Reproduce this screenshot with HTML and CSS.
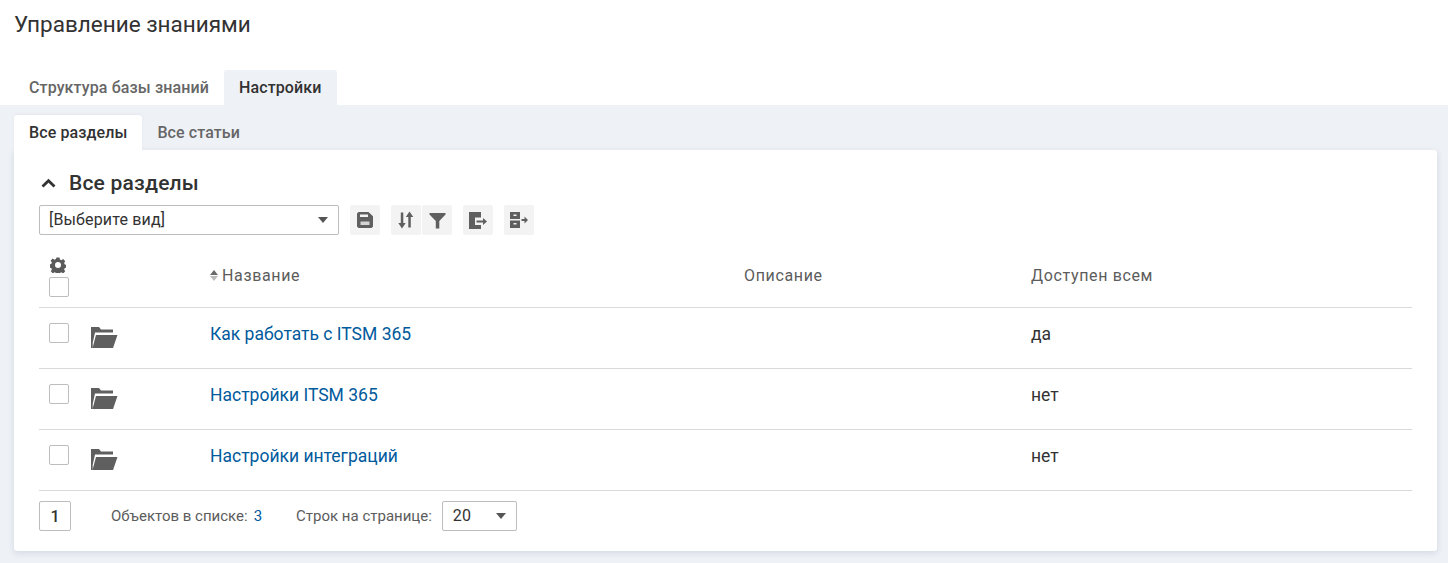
FILE: index.html
```html
<!DOCTYPE html>
<html lang="ru">
<head>
<meta charset="utf-8">
<title>Управление знаниями</title>
<link rel="stylesheet" href="styles.css">
</head>
<body>
<header class="top">
  <h1 class="title">Управление знаниями</h1>
  <nav class="tabs">
    <span class="tab">Структура базы знаний</span>
    <span class="tab tab-on">Настройки</span>
  </nav>
</header>
<main class="main">
  <nav class="subtabs">
    <span class="subtab subtab-on">Все разделы</span>
    <span class="subtab">Все статьи</span>
  </nav>
  <section class="card">
    <div class="card-head">
      <svg class="chev" width="15" height="10" viewBox="0 0 15 10"><path d="M1.500 8.500 7.500 2.700 13.500 8.500" fill="none" stroke="#333" stroke-width="2.800"/></svg>
      <h2 class="card-title">Все разделы</h2>
    </div>
    <div class="toolbar">
      <div class="select select-view"><span class="select-text">[Выберите вид]</span><i class="caret"></i></div>
      <button class="tool"><svg width="16" height="16" viewBox="0 0 16 16"><path fill="#5f5f5f" fill-rule="evenodd" d="M0 1.500 1.500 0h10L16 4.300V14.500L14.500 16h-13L0 14.500ZM3 2.500v2.500h8V2.500Z"/><path fill="#d4d4d4" d="M3.500 9.500h9V13h-9z"/></svg></button>
      <div class="tool-pair">
        <button class="tool"><svg width="16" height="18" viewBox="0 0 16 18"><path fill="#5f5f5f" d="M2.800 1.500h2.500V12h2.400L4 17.500.3 12h2.500zM10.300 16.500h2.500V6h2.500L11.500.5 7.800 6h2.500z"/></svg></button>
        <button class="tool"><svg width="17" height="17" viewBox="0 0 17 17"><path fill="#5f5f5f" d="M.5 1h16v1.500L10.300 9v7.500H6.800V9L.5 2.500z"/></svg></button>
      </div>
      <button class="tool"><svg width="18" height="17" viewBox="0 0 18 17"><path fill="#5f5f5f" d="M0 0h12v5.500H6V13h6v4H0z"/><path fill="#5f5f5f" d="M7.500 8.400H14V6l4 3.500-4 3.500v-2.400H7.500z"/></svg></button>
      <button class="tool"><svg width="18" height="16" viewBox="0 0 18 16"><path fill="#5f5f5f" fill-rule="evenodd" d="M0 0h10v7H0zM3.500 2.500V4h3V2.500zM0 8.500h10V16H0zM3.500 11v1.500h3V11z"/><path fill="#5f5f5f" d="M11.500 7h3V4.500L18 8l-3.500 3.500V9h-3z"/></svg></button>
    </div>
    <div class="row row-head">
      <div class="cell-check">
        <svg class="gear" width="16" height="16" viewBox="0 0 16 16"><path fill="#5a5a5a" fill-rule="evenodd" d="M6.500 .5h3l.4 2 1.500.7 1.800-1.100 2 2.100-1.100 1.700.7 1.500 2 .4v2.900l-2 .4-.7 1.500 1.100 1.700-2 2.100-1.800-1.100-1.500.7-.4 2h-3l-.4-2-1.500-.7-1.800 1.100-2-2.100 1.100-1.700-.7-1.500-2-.4V7.300l2-.4.7-1.500L.6 3.700l2-2.100 1.800 1.100 1.500-.7zM8 5a3 3 0 1 0 0 6 3 3 0 0 0 0-6z"/></svg>
        <span class="check"></span>
      </div>
      <div></div>
      <div class="th th-sort"><span class="sort"><i class="up"></i><i class="down"></i></span>Название</div>
      <div class="th">Описание</div>
      <div class="th">Доступен всем</div>
    </div>
    <div class="row">
      <div class="cell-check"><span class="check"></span></div>
      <div class="cell-folder"><svg width="28" height="22" viewBox="0 0 28 22"><use href="#folder"/></svg></div>
      <a class="link">Как работать с ITSM 365</a>
      <div></div>
      <div class="val">да</div>
    </div>
    <div class="row">
      <div class="cell-check"><span class="check"></span></div>
      <div class="cell-folder"><svg width="28" height="22" viewBox="0 0 28 22"><use href="#folder"/></svg></div>
      <a class="link">Настройки ITSM 365</a>
      <div></div>
      <div class="val">нет</div>
    </div>
    <div class="row">
      <div class="cell-check"><span class="check"></span></div>
      <div class="cell-folder"><svg width="28" height="22" viewBox="0 0 28 22"><use href="#folder"/></svg></div>
      <a class="link">Настройки интеграций</a>
      <div></div>
      <div class="val">нет</div>
    </div>
    <div class="pager">
      <span class="page">1</span>
      <span class="count">Объектов в списке:<b class="num">3</b></span>
      <span class="per">Строк на странице:</span>
      <div class="select select-per"><span class="select-text">20</span><i class="caret"></i></div>
    </div>
  </section>
</main>
<svg class="defs" width="0" height="0"><defs><symbol id="folder" viewBox="0 0 28 22"><path fill="#5f5f5f" d="M1 0h8l2 2.500h12v3H5L2.700 16v5H1z"/><path fill="#5f5f5f" d="M6 8h21.500L23 21H2.500z"/></symbol></defs></svg>
</body>
</html>
```
FILE: styles.css
```css
* { box-sizing: border-box; }
html, body { margin: 0; padding: 0; }
body { width: 1448px; height: 563px; overflow: hidden; background: #eef1f6; font-family: Roboto, "Noto Sans", sans-serif; color: #323232; }
.top { background: #fff; height: 105px; padding-left: 14px; display: flex; flex-direction: column; }
.title { margin: 0; padding-top: 11px; height: 70px; font-size: 22.500px; line-height: 26px; font-weight: 400; color: #323232; }
.tabs { display: flex; height: 35px; }
.tab { flex: none; padding: 0 15px; line-height: 35px; font-size: 16px; font-weight: 500; color: #666; border-radius: 3px 3px 0 0; letter-spacing: .12px; }
.tab-on { background: #eef1f6; color: #323232; width: 113px; }
.main { padding: 10px 11px 12px 14px; }
.subtabs { display: flex; height: 35px; }
.subtab { padding: 0 15px; line-height: 35px; font-size: 16px; font-weight: 500; color: #666; border-radius: 3px 3px 0 0; letter-spacing: .1px; }
.subtab-on { background: #fff; color: #323232; box-shadow: 0 -1px 3px rgba(40,60,90,.05); }
.card { background: #fff; height: 401px; padding: 0 25px; border-radius: 0 3px 3px 3px; box-shadow: 0 2px 6px rgba(40,60,90,.14); }
.card-head { height: 55px; display: flex; align-items: center; padding-top: 11px; }
.chev { margin-left: 2px; }
.card-title { margin: 0 0 0 13px; font-size: 21px; font-weight: 500; letter-spacing: .2px; color: #323232; }
.toolbar { display: flex; align-items: center; height: 30px; }
.select { border: 1px solid #bdbdbd; border-radius: 2px; height: 30px; display: flex; align-items: center; justify-content: space-between; font-size: 16px; letter-spacing: .15px; background: #fff; color: #323232; }
.select-text { position: relative; top: -1px; }
.select-view { width: 300px; padding: 0 10px 0 9px; }
.select-per { width: 75px; padding: 0 10px 0 10px; font-size: 16px; }
.caret { width: 0; height: 0; border: 5px solid transparent; border-top: 6px solid #555; border-bottom: 0; }
.tool { width: 30px; height: 30px; border: 0; padding: 0; background: #f3f3f3; border-radius: 2px; display: flex; align-items: center; justify-content: center; margin-left: 11px; }
.tool-pair { display: flex; gap: 1px; margin-left: 11px; }
.tool-pair .tool { margin: 0; }
.row { display: grid; grid-template-columns: 51px 120px 534px 287px 1fr; height: 61px; border-bottom: 1px solid #d9d9d9; align-items: start; }
.row-head { height: 73px; align-items: center; }
.cell-check { display: flex; flex-direction: column; align-items: flex-start; padding-left: 10px; align-self: start; padding-top: 15px; }
.row-head .cell-check { padding-top: 22px; }
.row-head .cell-check .gear { margin: 0 0 4px 1px; }
.check { display: block; width: 20px; height: 20px; border: 1px solid #bdbdbd; border-radius: 2px; background: #fff; }
.cell-folder { display: flex; align-self: start; padding-top: 19px; }
.th { font-size: 16px; color: #5c5c5c; letter-spacing: .65px; display: flex; align-items: center; padding-top: 9px; }
.sort { display: inline-flex; flex-direction: column; gap: 1px; margin-right: 4px; }
.up { width: 0; height: 0; border: 4px solid transparent; border-bottom: 5px solid #6a6a6a; border-top: 0; }
.down { width: 0; height: 0; border: 4px solid transparent; border-top: 5px solid #bbb; border-bottom: 0; }
.link { font-size: 17.500px; line-height: 21px; color: #005a9c; padding-top: 16px; }
.val { font-size: 17.500px; line-height: 21px; color: #323232; padding-top: 16px; }
.pager { display: flex; align-items: center; height: 40px; padding-top: 10px; font-size: 15px; color: #5c5c5c; }
.page { width: 32px; height: 30px; border: 1px solid #bdbdbd; border-radius: 2px; display: flex; align-items: center; justify-content: center; font-size: 16px; font-weight: 500; color: #323232; }
.count { margin-left: 40px; }
.num { font-weight: 400; color: #005a9c; margin-left: 6px; }
.per { margin-left: 34px; margin-right: 10px; }
.defs { position: absolute; }
```
